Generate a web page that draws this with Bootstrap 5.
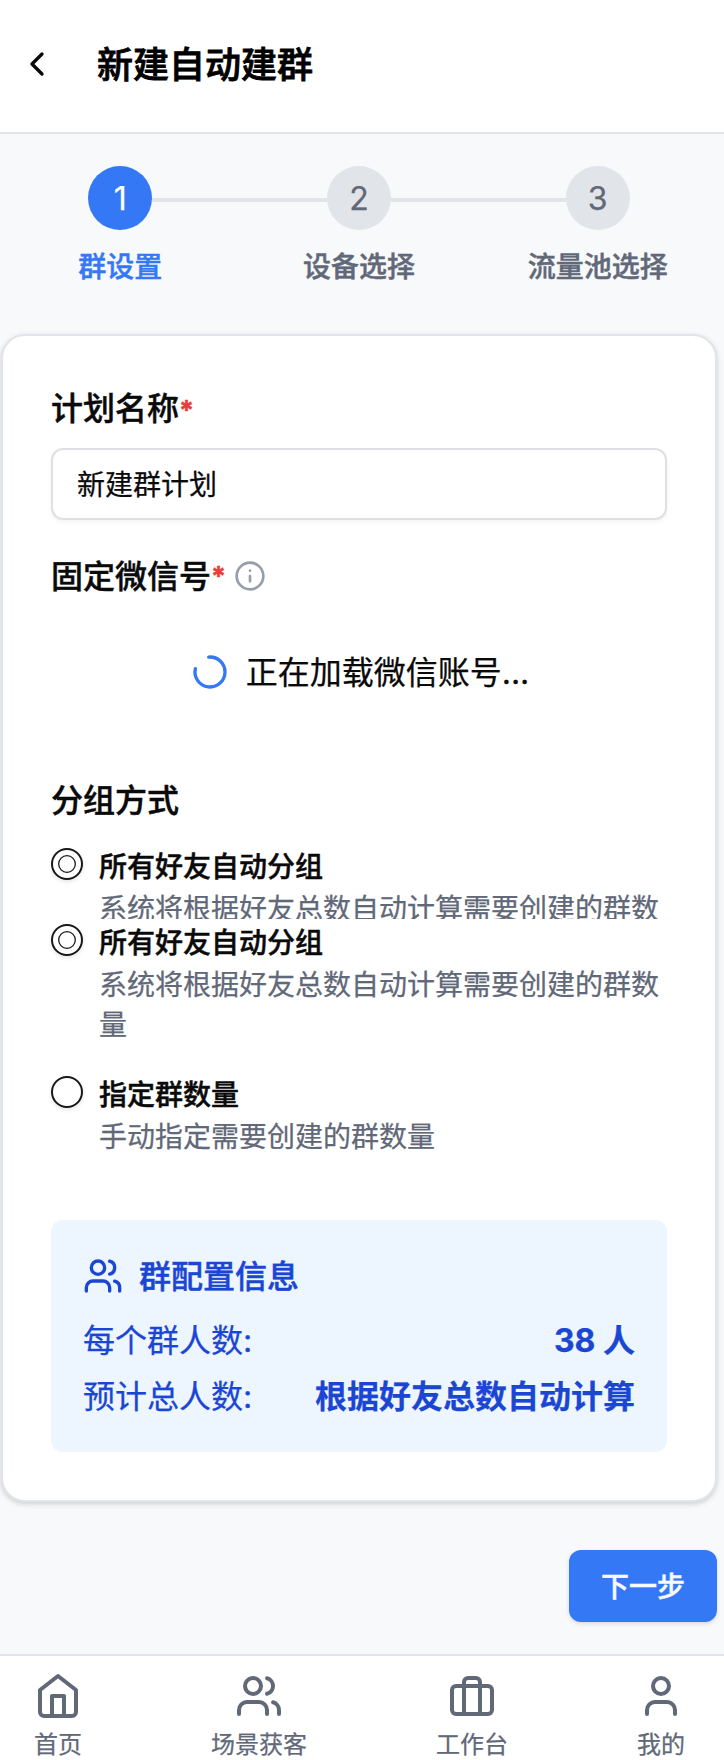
<!DOCTYPE html>
<html lang="zh-CN">
<head>
<meta charset="utf-8">
<meta name="viewport" content="width=device-width, initial-scale=1">
<title>新建自动建群</title>
<link href="https://cdn.jsdelivr.net/npm/bootstrap@5.3.0/dist/css/bootstrap.min.css" rel="stylesheet">
<style>
  :root { --brand: #3478f6; --line: #e1e4e9; --muted: #616878; --ink: #0a0a0b; --info: #1b46d4; }
  body { font-family: Inter, "Noto Sans CJK SC", sans-serif; background: #f8f9fb; color: var(--ink); font-size: 32px; line-height: 48px; height: 1760px; overflow: hidden; -webkit-text-stroke: .25px currentColor; }
  svg { fill: none; stroke: currentColor; stroke-width: 2; stroke-linecap: round; stroke-linejoin: round; flex: none; display: block; }
  .i32 { width: 32px; height: 32px; }
  .i40 { width: 40px; height: 40px; }
  .i48 { width: 48px; height: 48px; }
  .semi { font-weight: 500; -webkit-text-stroke: .45px currentColor; }
  .topbar { height: 134px; padding: 0 17px 4px; border-bottom: 2px solid var(--line); }
  .topbar h1 { font-size: 36px; line-height: 56px; margin: 2px 0 0 40px; color: #000; -webkit-text-stroke-width: .8px; }
  .page-col { width: 716px; margin-left: 1px; }
  .steps { padding-top: 32px; height: 200px; }
  .step { color: var(--muted); font-size: 28px; line-height: 40px; }
  .step + .step::before { content: ""; position: absolute; height: 4px; top: 32px; right: calc(50% + 32px); width: calc(100% - 64px); background: var(--line); }
  .dot { width: 64px; height: 64px; background: var(--line); font-size: 32px; font-weight: 400; margin-bottom: 17px; padding-top: 2px; }
  .step.current { color: var(--brand); }
  .step.current .dot { background: var(--brand); color: #fff; }
  .panel { height: 1168px; border: 2px solid var(--line); border-radius: 24px; padding: 48px; box-shadow: 0 2px 6px rgba(0,0,0,.1), 0 2px 4px rgba(0,0,0,.08); }
  .title-row { height: 48px; line-height: 50px; }
  .req { color: #eb3b38; display: inline-block; width: 14px; font-size: 27px; font-weight: 700; }
  .hint { color: #969dab; margin-left: 9px; }
  .plan-input { height: 72px; font-size: 28px; padding: 0 24px 2px; border: 2px solid #dfe0e6; border-radius: 12px; margin: 16px 0 32px; color: var(--ink); box-shadow: 0 2px 4px rgba(0,0,0,.05); -webkit-text-stroke: .25px currentColor; }
  .loading { height: 144px; line-height: 50px; }
  .loading span { padding-top: 2px; }
  .loading svg { color: var(--brand); margin-right: 16px; margin-left: 1px; }
  .group-title { margin: 32px 0 24px; }
  .choice { font-size: 28px; gap: 16px; }
  .choice-cut { height: 71px; overflow: hidden; margin-bottom: 5px; }
  .choice-last { margin-top: 32px; }
  .ring { width: 32px; height: 32px; border: 2px solid #18181b; border-radius: 50%; flex: none; box-shadow: 0 2px 4px rgba(0,0,0,.1); }
  .ring svg { width: 18px; height: 18px; stroke: #18181b; stroke-width: 1.3; }
  .choice strong { display: block; line-height: 28px; margin-top: 5px; }
  .choice p { line-height: 40px; color: var(--muted); margin: 7px 0 0; padding-top: 1px; margin-bottom: -1px; }
  .summary { background: #edf5ff; color: var(--info); border-radius: 12px; padding: 33px 32px 31px; height: 232px; margin-top: 64px; }
  .summary-title { gap: 16px; margin-bottom: 16px; }
  .summary-title svg { margin-top: -2px; }
  .next { width: 148px; height: 72px; margin-top: 48px; background: var(--brand); border-radius: 12px; border: 0; color: #f8fafc; font-size: 28px; padding: 2px 0 0; box-shadow: 0 2px 4px rgba(0,0,0,.12); }
  .tabs { height: 106px; margin-top: 32px; border-top: 2px solid var(--line); padding: 16px 39px 0 34px; color: var(--muted); font-size: 24px; line-height: 32px; }
  .tabs svg { margin-bottom: 9px; }
</style>
</head>
<body>
<header class="topbar bg-white d-flex align-items-center">
  <svg class="i40" viewBox="0 0 24 24"><path d="m15 18-6-6 6-6"/></svg>
  <h1 class="semi">新建自动建群</h1>
</header>

<main class="page-col">
  <div class="steps d-flex">
    <div class="step current col-4 position-relative d-flex flex-column align-items-center">
      <span class="dot rounded-circle d-flex align-items-center justify-content-center">1</span><span class="semi">群设置</span></div>
    <div class="step col-4 position-relative d-flex flex-column align-items-center">
      <span class="dot rounded-circle d-flex align-items-center justify-content-center">2</span><span class="semi">设备选择</span></div>
    <div class="step col-4 position-relative d-flex flex-column align-items-center">
      <span class="dot rounded-circle d-flex align-items-center justify-content-center">3</span><span class="semi">流量池选择</span></div>
  </div>

  <section class="panel bg-white">
    <label class="title-row semi d-block" for="plan">计划名称<span class="req">*</span></label>
    <input id="plan" class="plan-input d-block w-100 bg-white" value="新建群计划">

    <div class="title-row semi d-flex">固定微信号<span class="req">*</span>
      <svg class="i32 hint mt-2" viewBox="0 0 24 24"><circle cx="12" cy="12" r="10"/><path d="M12 16v-4M12 8h.01"/></svg>
    </div>
    <div class="loading d-flex align-items-center justify-content-center">
      <svg class="i40" viewBox="0 0 24 24"><path transform="rotate(-95 12 12)" d="M21 12a9 9 0 1 1-6.219-8.56"/></svg><span>正在加载微信账号...</span>
    </div>

    <div class="title-row semi group-title">分组方式</div>
    <div class="choice choice-cut d-flex">
      <span class="ring d-flex align-items-center justify-content-center"><svg viewBox="0 0 18 18"><circle cx="9" cy="9" r="8.3"/></svg></span>
      <div><strong class="semi">所有好友自动分组</strong><p>系统将根据好友总数自动计算需要创建的群数量</p></div>
    </div>
    <div class="choice d-flex">
      <span class="ring d-flex align-items-center justify-content-center"><svg viewBox="0 0 18 18"><circle cx="9" cy="9" r="8.3"/></svg></span>
      <div><strong class="semi">所有好友自动分组</strong><p>系统将根据好友总数自动计算需要创建的群数量</p></div>
    </div>
    <div class="choice choice-last d-flex">
      <span class="ring"></span>
      <div><strong class="semi">指定群数量</strong><p>手动指定需要创建的群数量</p></div>
    </div>

    <div class="summary">
      <div class="summary-title semi d-flex align-items-center">
        <svg class="i40" viewBox="0 0 24 24"><path d="M16 21v-2a4 4 0 0 0-4-4H6a4 4 0 0 0-4 4v2"/><circle cx="9" cy="7" r="4"/><path d="M22 21v-2a4 4 0 0 0-3-3.87M16 3.13a4 4 0 0 1 0 7.75"/></svg>群配置信息
      </div>
      <div class="d-flex justify-content-between mb-2"><span>每个群人数:</span><b>38 人</b></div>
      <div class="d-flex justify-content-between"><span>预计总人数:</span><b>根据好友总数自动计算</b></div>
    </div>
  </section>

  <div class="d-flex justify-content-end"><button class="next semi btn btn-primary" type="button">下一步</button></div>
</main>

<nav class="tabs bg-white d-flex justify-content-between">
  <div class="d-flex flex-column align-items-center">
    <svg class="i48" viewBox="0 0 24 24"><path d="m3 9 9-7 9 7v11a2 2 0 0 1-2 2H5a2 2 0 0 1-2-2z"/><path d="M9 22V12h6v10"/></svg>首页</div>
  <div class="d-flex flex-column align-items-center">
    <svg class="i48" viewBox="0 0 24 24"><path d="M16 21v-2a4 4 0 0 0-4-4H6a4 4 0 0 0-4 4v2"/><circle cx="9" cy="7" r="4"/><path d="M22 21v-2a4 4 0 0 0-3-3.87M16 3.13a4 4 0 0 1 0 7.75"/></svg>场景获客</div>
  <div class="d-flex flex-column align-items-center">
    <svg class="i48" viewBox="0 0 24 24"><rect x="2" y="7" width="20" height="14" rx="2"/><path d="M16 21V5a2 2 0 0 0-2-2h-4a2 2 0 0 0-2 2v16"/></svg>工作台</div>
  <div class="d-flex flex-column align-items-center">
    <svg class="i48" viewBox="0 0 24 24"><path d="M19 21v-2a4 4 0 0 0-4-4H9a4 4 0 0 0-4 4v2"/><circle cx="12" cy="7" r="4"/></svg>我的</div>
</nav>
<script src="https://cdn.jsdelivr.net/npm/bootstrap@5.3.0/dist/js/bootstrap.bundle.min.js"></script>
</body>
</html>
